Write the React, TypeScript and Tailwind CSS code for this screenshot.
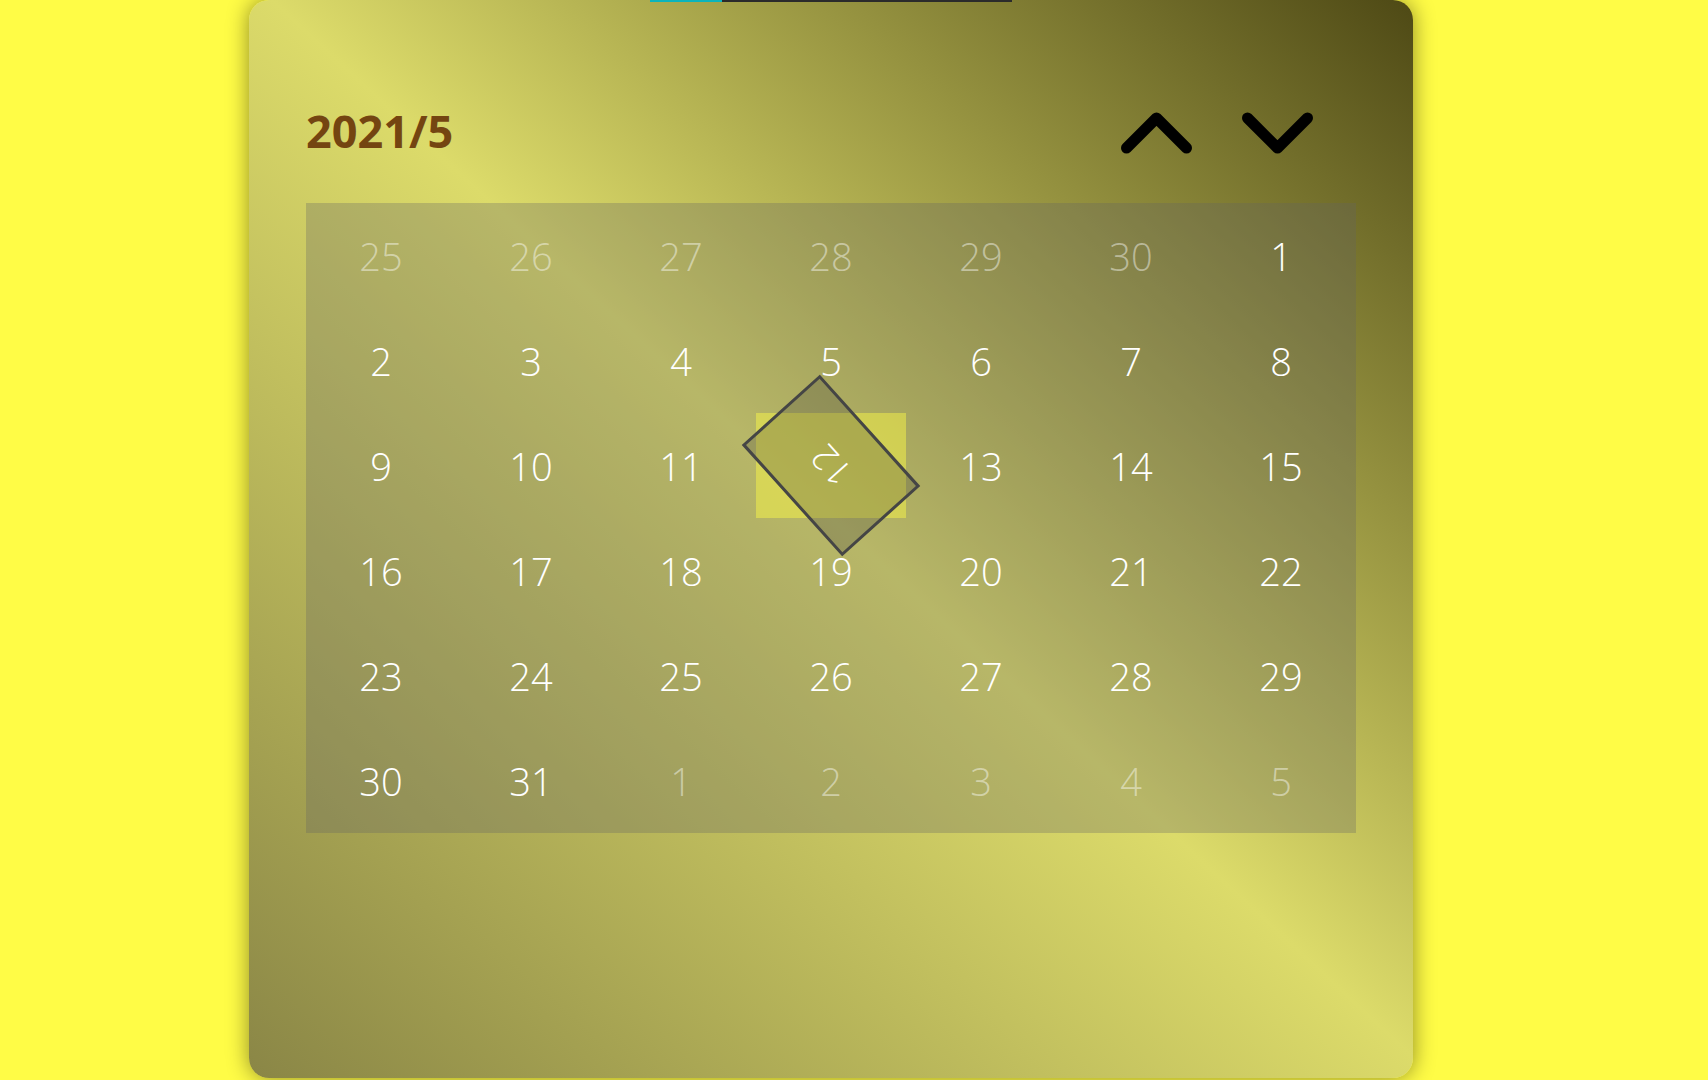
import React from "react";

type Cell = { n: number; other?: boolean; active?: boolean };

const cells: Cell[] = [
  ...[25, 26, 27, 28, 29, 30].map((n) => ({ n, other: true })),
  ...Array.from({ length: 31 }, (_, i) => ({ n: i + 1, active: i + 1 === 12 })),
  ...[1, 2, 3, 4, 5].map((n) => ({ n, other: true })),
];

function Chevron({ dir }: { dir: "up" | "down" }) {
  return (
    <svg width="71" height="42" viewBox="0 0 71 42" fill="none">
      <polyline
        points={dir === "up" ? "5.5,36 35.5,6 65.5,36" : "5.5,6 35.5,36 65.5,6"}
        stroke="#000"
        strokeWidth="11"
        strokeLinecap="round"
        strokeLinejoin="round"
      />
    </svg>
  );
}

export default function App() {
  return (
    <div className="w-full h-[1080px] bg-[#fffc46] overflow-hidden font-['Open_Sans',sans-serif]">
      <div className="relative ml-[249px] w-[1164px] h-[1078px] rounded-[20px] px-[57px] pt-[100px] shadow-[0_0_22px_rgba(0,0,0,0.45)] bg-[linear-gradient(to_top_right,#8a8646_0%,#dcdb6a_51%,#4e4915_100%)]">
        <div className="absolute top-0 left-1/2 -translate-x-1/2 w-[362px] h-[2px] bg-[#2b2b2b]">
          <div className="w-[72px] h-full bg-[#0bb4bc]" />
        </div>

        <div className="flex items-center justify-between h-[61px] pr-[43px]">
          <div className="text-[45px] leading-[61px] font-bold text-[#744511]">2021/5</div>
          <div className="flex gap-[50px] pt-[4px]">
            <Chevron dir="up" />
            <Chevron dir="down" />
          </div>
        </div>

        <div className="mt-[42px] grid grid-cols-7 w-[1050px] bg-[rgba(100,100,100,0.3)]">
          {cells.map((c, i) => (
            <div
              key={i}
              className={
                "relative h-[105px] flex items-center justify-center pt-[2px] text-[38px] font-light " +
                (c.other ? "text-white/45" : "text-white") +
                (c.active ? " bg-[rgba(255,252,69,0.45)]" : "")
              }
            >
              {c.active ? (
                <div className="absolute inset-0 border-[3.5px] border-[#454545] bg-[rgba(60,60,60,0.25)] rotate-[228deg] flex items-center justify-center text-[36px]">
                  {c.n}
                </div>
              ) : (
                c.n
              )}
            </div>
          ))}
        </div>
      </div>
    </div>
  );
}
